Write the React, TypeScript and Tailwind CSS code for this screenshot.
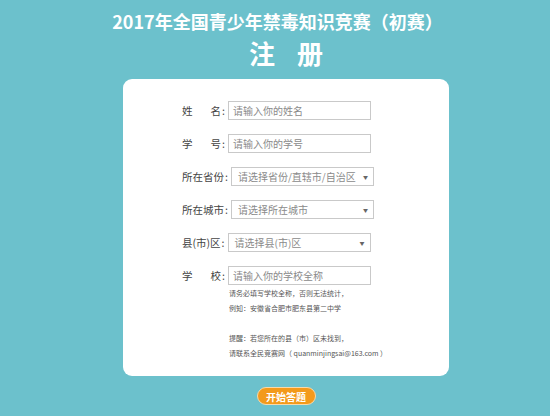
import React from "react";

const font = { fontFamily: '"Noto Sans CJK SC", "Noto Sans", sans-serif' };

interface FieldProps {
  label: React.ReactNode;
  placeholder: string;
  select?: boolean;
  spread?: boolean;
}

const Field: React.FC<FieldProps> = ({ label, placeholder, select, spread }) => (
  <div className="flex h-[19px] items-center text-[10.5px] leading-[19px] text-[#444]">
    <span className={spread ? "flex w-[39px] justify-between" : "flex"}>{label}</span>
    <span className="ml-[1px] mr-[3px]">:</span>
    <div className="flex h-[19px] w-[143px] items-center justify-between border border-[#c9c9c9] bg-white text-[10px] text-[#8a8a8a]">
      <span className={select ? "whitespace-nowrap pl-[6px]" : "whitespace-nowrap pl-[4px]"}>
        {placeholder}
      </span>
      {select && <span className="pr-[5px] text-[5px] text-[#666]">▼</span>}
    </div>
  </div>
);

const App: React.FC = () => {
  return (
    <div className="h-[416px] w-[550px] overflow-hidden bg-[#6cc1cc]" style={font}>
      <h1 className="mt-[10px] pl-[5px] text-center text-[18px] font-bold leading-[22px] text-white">
        2017年全国青少年禁毒知识竞赛（初赛）
      </h1>
      <h2 className="mt-[6px] flex justify-center gap-[22px] pl-[22px] text-[26px] font-bold leading-[30px] text-white">
        <span>注</span>
        <span>册</span>
      </h2>

      <div className="ml-[123px] w-[326px]">
        <div className="mt-[11px] flex flex-col rounded-[9px] bg-white pb-[15px] pl-[59px] pt-[22px]">
          <div className="flex flex-col gap-[14px]">
            <Field
              spread
              label={
                <>
                  <span>姓</span>
                  <span>名</span>
                </>
              }
              placeholder="请输入你的姓名"
            />
            <Field
              spread
              label={
                <>
                  <span>学</span>
                  <span>号</span>
                </>
              }
              placeholder="请输入你的学号"
            />
            <Field label="所在省份" placeholder="请选择省份/直辖市/自治区" select />
            <Field label="所在城市" placeholder="请选择所在城市" select />
            <Field label="县(市)区" placeholder="请选择县(市)区" select />
            <Field
              spread
              label={
                <>
                  <span>学</span>
                  <span>校</span>
                </>
              }
              placeholder="请输入你的学校全称"
            />
          </div>

          <div className="ml-[47px] mt-[1px] text-[7px] leading-[15px] text-[#555]">
            <p>请务必填写学校全称，否则无法统计，</p>
            <p>例知：安徽省合肥市肥东县第二中学</p>
            <p>&nbsp;</p>
            <p>提醒：若您所在的县（市）区未找到，</p>
            <p>请联系全民竞赛网（ quanminjingsai@163.com ）</p>
          </div>
        </div>

        <div className="mt-[11px] flex justify-center">
          <button className="flex h-[18px] w-[59px] items-center justify-center rounded-full border border-[#f8d9a8] bg-[#f39a1b] text-[10px] font-bold text-white">
            开始答题
          </button>
        </div>
      </div>
    </div>
  );
};

export default App;
